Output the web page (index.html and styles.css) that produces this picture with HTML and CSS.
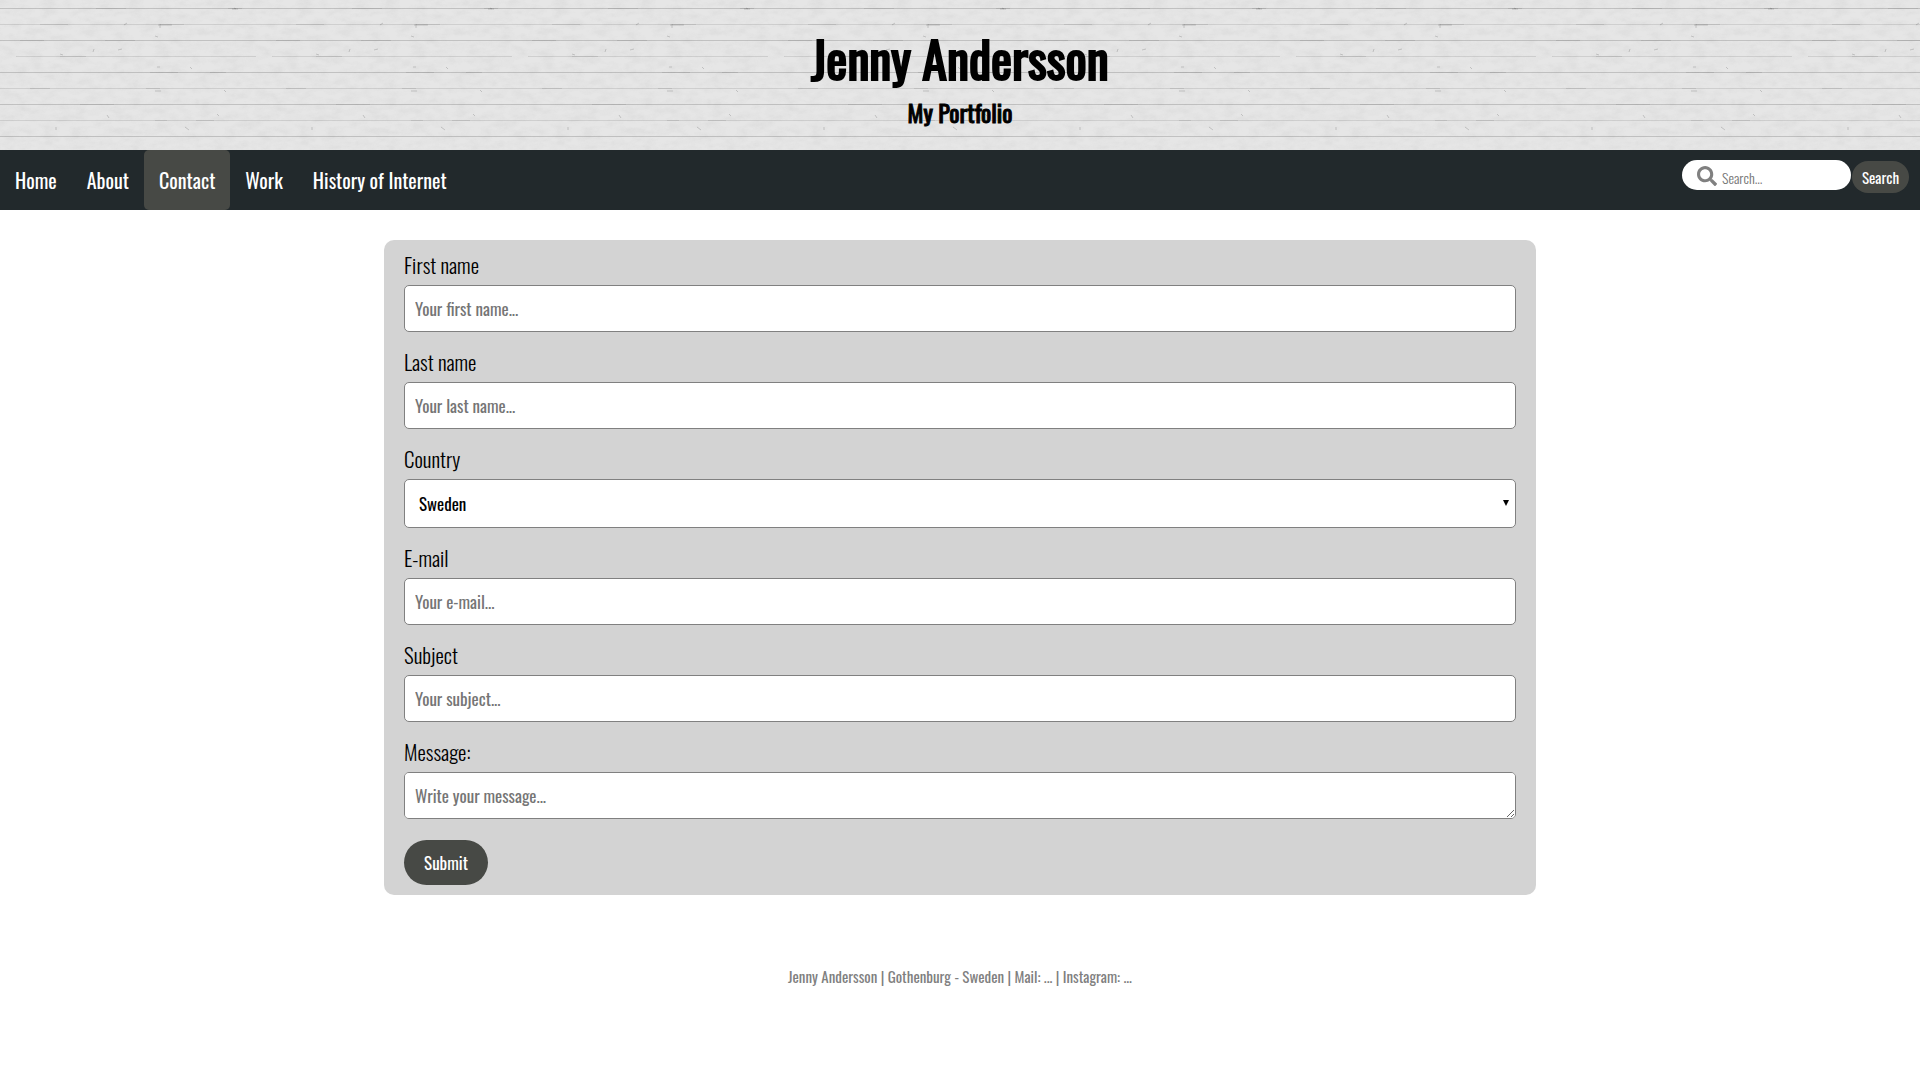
FILE: index.html
```html
<!DOCTYPE html>
<html lang="en">
<head>
<meta charset="utf-8">
<meta name="viewport" content="width=device-width, initial-scale=1">
<title>Jenny Andersson - Contact</title>
<link rel="stylesheet" href="styles.css">
</head>
<body>
<header class="banner">
  <h1 class="banner-title">Jenny Andersson</h1>
  <h2 class="banner-subtitle">My Portfolio</h2>
</header>
<nav class="navbar">
  <ul class="menu">
    <li><a class="menu-link" href="#home">Home</a></li>
    <li><a class="menu-link" href="#about">About</a></li>
    <li><a class="menu-link active" href="#contact" aria-current="page">Contact</a></li>
    <li><a class="menu-link" href="#work">Work</a></li>
    <li><a class="menu-link" href="#history">History of Internet</a></li>
  </ul>
  <form class="search">
    <label class="search-box">
      <svg class="search-icon" viewBox="0 0 512 512" aria-label="Search"><path fill="currentColor" d="M505 442.700L405.300 343c-4.500-4.500-10.600-7-17-7H372c27.600-35.300 44-79.700 44-128C416 93.100 322.900 0 208 0S0 93.100 0 208s93.100 208 208 208c48.300 0 92.700-16.400 128-44v16.300c0 6.400 2.500 12.500 7 17l99.700 99.700c9.400 9.400 24.600 9.400 33.900 0l28.300-28.300c9.400-9.400 9.400-24.600.1-34zM208 336c-70.700 0-128-57.200-128-128 0-70.700 57.200-128 128-128 70.700 0 128 57.200 128 128 0 70.700-57.200 128-128 128z"/></svg>
      <input class="search-input" type="text" placeholder="Search...">
    </label>
    <button class="search-button" type="submit">Search</button>
  </form>
</nav>
<main class="content">
  <form class="contact-form">
    <div class="field">
      <label class="label" for="fname">First name</label>
      <input class="control" type="text" id="fname" placeholder="Your first name...">
    </div>
    <div class="field">
      <label class="label" for="lname">Last name</label>
      <input class="control" type="text" id="lname" placeholder="Your last name...">
    </div>
    <div class="field">
      <label class="label" for="country">Country</label>
      <select class="control select" id="country">
        <option>Sweden</option>
      </select>
    </div>
    <div class="field">
      <label class="label" for="email">E-mail</label>
      <input class="control" type="email" id="email" placeholder="Your e-mail...">
    </div>
    <div class="field">
      <label class="label" for="subject">Subject</label>
      <input class="control" type="text" id="subject" placeholder="Your subject...">
    </div>
    <div class="field">
      <label class="label" for="message">Message:</label>
      <textarea class="control message" id="message" rows="1" placeholder="Write your message..."></textarea>
    </div>
    <button class="submit" type="submit">Submit</button>
  </form>
</main>
<footer class="footer">Jenny Andersson | Gothenburg - Sweden | Mail: ... | Instagram: ...</footer>
</body>
</html>
```
FILE: styles.css
```css
* {
  box-sizing: border-box;
}

body {
  margin: 0;
  background: #fff;
  color: #000;
  font-family: Oswald, "Liberation Sans Narrow", "Roboto Condensed", "Open Sans Condensed", "Liberation Sans", sans-serif;
}

input,
select,
textarea,
button {
  font-family: inherit;
}

/* Pale wooden boards: grain tile under 16px board joints */
.banner {
  display: flex;
  flex-direction: column;
  align-items: center;
  padding: 24px 20px 16px;
  background-color: #e6e6e6;
  background-image:
    url("data:image/svg+xml,%3Csvg xmlns='http://www.w3.org/2000/svg' width='256' height='256'%3E%3Cg stroke='%23000'%3E%3Cpath stroke-opacity='.16' d='M0 8.500H256M0 40.500H256M0 72.500H256M0 104.500H256M0 136.500H256'/%3E%3Cpath stroke-opacity='.1' d='M0 24.500H256M16 56.500H256M0 88.500H256M0 120.500H256'/%3E%3Cpath stroke-opacity='.08' d='M40 24.500h28M160 24.500h24M96 8.500h30M228 8.500h14M20 40.500h24M105 40.500h30M60 56.500h26M150 72.500h28M210 72.500h16M30 88.500h20M146 88.500h14M80 104.500h34M196 120.500h18M155 120.500h12'/%3E%3C/g%3E%3C/svg%3E"),
    url("data:image/svg+xml,%3Csvg xmlns='http://www.w3.org/2000/svg' width='256' height='256'%3E%3Cfilter id='g' x='0' y='0' width='100%25' height='100%25' color-interpolation-filters='sRGB'%3E%3CfeTurbulence type='fractalNoise' baseFrequency='.07 .14' numOctaves='5' seed='4' stitchTiles='stitch'/%3E%3CfeColorMatrix values='0 0 0 0 .5 0 0 0 0 .5 0 0 0 0 .5 .16 0 0 0 -.06'/%3E%3C/filter%3E%3Crect width='256' height='256' filter='url(%23g)'/%3E%3Cg fill='none' stroke='%23888' stroke-opacity='.4'%3E%3Cpath d='M160 24v4M158 25h14M124 25l3-2M155 36l3 1M94 49l-1 3M118 50l4-1M60 54l3 1M157 67h3M190 67l2 2M155 91h6M224 90l2 2M107 115l2 3M217 114l2 2M56 127v3M185 127l4 3M234 8l2 1M232 9h6'/%3E%3C/g%3E%3C/svg%3E");
}

/* Regular-weight letterforms thickened by a stroke */
.banner-title,
.banner-subtitle {
  margin: 0;
  font-weight: 400;
}

.banner-title {
  font-size: 50px;
  line-height: 66px;
  -webkit-text-stroke: 2px #000;
}

.banner-subtitle {
  font-size: 24px;
  line-height: 44px;
  -webkit-text-stroke: 1px #000;
}

.navbar {
  display: flex;
  justify-content: space-between;
  background: #22292c;
}

.menu {
  display: flex;
  margin: 0;
  padding: 0;
  list-style: none;
}

.menu-link {
  display: block;
  padding: 0 15px;
  border-radius: 5px;
  color: #fff;
  font-size: 20px;
  line-height: 60px;
  text-decoration: none;
}

.menu-link.active {
  background: #474945;
}

.search {
  display: flex;
  align-items: flex-start;
  gap: 1px;
  padding: 10px 11px 0 0;
}

.search-box {
  display: flex;
  align-items: center;
  gap: 5px;
  width: 169px;
  height: 30px;
  padding: 2px 15px 0;
  border-radius: 15px;
  background: #fff;
  color: #808080;
}

.search-icon {
  flex: none;
  width: 20px;
  height: 20px;
}

.search-input {
  min-width: 0;
  flex: 1;
  padding: 2px 0 0;
  border: 0;
  outline: 0;
  background: none;
  font-size: 14px;
  font-weight: 350;
}

.search-button {
  margin-top: 1px;
  width: 57px;
  height: 32px;
  padding: 0;
  border: 0;
  border-radius: 16px;
  background: #474945;
  color: #fff;
  font-size: 15px;
}

.content {
  padding: 30px 0;
}

.contact-form {
  display: flex;
  flex-direction: column;
  gap: 15px;
  width: 60%;
  margin: 0 auto;
  padding: 10px 20px;
  border-radius: 10px;
  background: #d3d3d3;
}

.field {
  display: flex;
  flex-direction: column;
  gap: 5px;
}

.label {
  font-size: 21px;
  font-weight: 350;
  line-height: 30px;
}

.control {
  width: 100%;
  height: 47px;
  padding: 10px;
  border: 1px solid #808080;
  border-radius: 5px;
  background: #fff;
  color: #000;
  font-size: 17px;
}

.control::placeholder,
.search-input::placeholder {
  color: #757575;
}

.select {
  height: 49px;
  padding: 10px 14px;
  appearance: none;
  background: #fff url("data:image/svg+xml,%3Csvg xmlns='http://www.w3.org/2000/svg' width='6' height='6'%3E%3Cpath d='M0 0h6L3 6z'/%3E%3C/svg%3E") no-repeat right 6px top 20px;
}

.message {
  display: block;
  line-height: 26px;
  resize: vertical;
}

.submit {
  align-self: flex-start;
  width: 84px;
  height: 45px;
  margin-top: 6px;
  padding: 0;
  border: 0;
  border-radius: 23px;
  background: #474945;
  color: #fff;
  font-size: 17px;
}

.footer {
  padding: 41px 20px;
  color: #808080;
  font-size: 15px;
  line-height: 20px;
  text-align: center;
}
```
